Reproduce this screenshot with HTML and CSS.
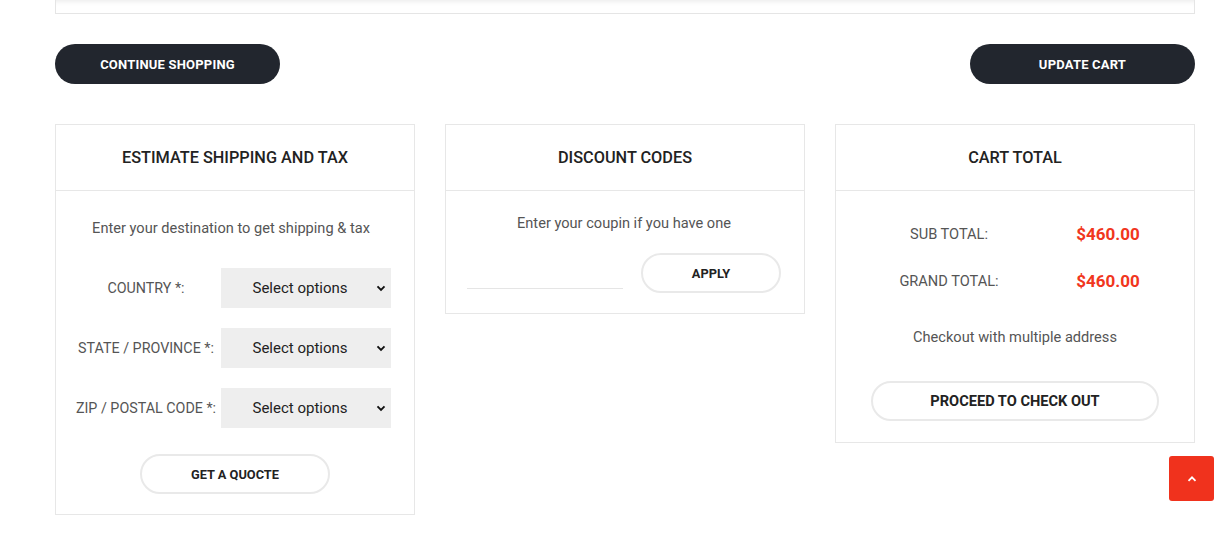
FILE: index.html
```html
<!DOCTYPE html>
<html lang="en">
<head>
<meta charset="utf-8">
<title>Cart</title>
<link rel="stylesheet" href="styles.css">
</head>
<body>
<div class="page">
  <div class="table-end"></div>

  <div class="cart-actions">
    <a class="btn-dark" href="#">CONTINUE SHOPPING</a>
    <a class="btn-dark" href="#">UPDATE CART</a>
  </div>

  <div class="panels">
    <section class="panel">
      <h3 class="panel-title">ESTIMATE SHIPPING AND TAX</h3>
      <div class="panel-body shipping">
        <p class="note">Enter your destination to get shipping &amp; tax</p>
        <div class="field">
          <label class="field-label">COUNTRY *:</label>
          <div class="select-wrap">
            <select class="select"><option>Select options</option></select>
            <svg class="chev" viewBox="0 0 10 10" width="10" height="10"><path d="M1.5 3.3 L5 6.8 L8.5 3.3" fill="none" stroke="#111" stroke-width="1.9"/></svg>
          </div>
        </div>
        <div class="field">
          <label class="field-label">STATE / PROVINCE *:</label>
          <div class="select-wrap">
            <select class="select"><option>Select options</option></select>
            <svg class="chev" viewBox="0 0 10 10" width="10" height="10"><path d="M1.5 3.3 L5 6.8 L8.5 3.3" fill="none" stroke="#111" stroke-width="1.9"/></svg>
          </div>
        </div>
        <div class="field">
          <label class="field-label">ZIP / POSTAL CODE *:</label>
          <div class="select-wrap">
            <select class="select"><option>Select options</option></select>
            <svg class="chev" viewBox="0 0 10 10" width="10" height="10"><path d="M1.5 3.3 L5 6.8 L8.5 3.3" fill="none" stroke="#111" stroke-width="1.9"/></svg>
          </div>
        </div>
        <div class="center">
          <a class="btn-outline quote" href="#">GET A QUOCTE</a>
        </div>
      </div>
    </section>

    <section class="panel">
      <h3 class="panel-title">DISCOUNT CODES</h3>
      <div class="panel-body discount">
        <p class="note">Enter your coupin if you have one</p>
        <div class="coupon-row">
          <input class="coupon-input" type="text">
          <a class="btn-outline apply" href="#">APPLY</a>
        </div>
      </div>
    </section>

    <section class="panel">
      <h3 class="panel-title">CART TOTAL</h3>
      <div class="panel-body totals">
        <div class="total-grid">
          <span class="total-label">SUB TOTAL:</span>
          <span class="total-value">$460.00</span>
          <span class="total-label">GRAND TOTAL:</span>
          <span class="total-value">$460.00</span>
        </div>
        <p class="note multi">Checkout with multiple address</p>
        <div class="center">
          <a class="btn-outline checkout" href="#">PROCEED TO CHECK OUT</a>
        </div>
      </div>
    </section>
  </div>
</div>

<a class="to-top" href="#">
  <svg viewBox="0 0 12 12" width="12" height="12"><path d="M2.5 7.8 L6 4.3 L9.5 7.8" fill="none" stroke="#fff" stroke-width="1.8"/></svg>
</a>
</body>
</html>
```

FILE: styles.css
```css
* { box-sizing: border-box; }

html, body {
  margin: 0;
  padding: 0;
  background: #fff;
}

body {
  font-family: Roboto, "Liberation Sans", Arial, sans-serif;
  color: #555;
  font-size: 14px;
}

.page {
  width: 1140px;
  margin-left: 55px;
}

.table-end {
  height: 14px;
  border: 1px solid #e5e5e5;
  border-top: none;
  box-shadow: inset 0 6px 6px -6px rgba(0, 0, 0, 0.12);
}

.cart-actions {
  display: flex;
  justify-content: space-between;
  margin-top: 30px;
}

.btn-dark {
  display: flex;
  align-items: center;
  justify-content: center;
  width: 225px;
  height: 40px;
  border-radius: 20px;
  background: #22262e;
  color: #fff;
  font-size: 13px;
  font-weight: 700;
  text-decoration: none;
  letter-spacing: 0.2px;
}

.panels {
  display: flex;
  align-items: flex-start;
  gap: 30px;
  margin-top: 40px;
}

.panel {
  width: 360px;
  border: 1px solid #e7e7e7;
}

.panel-title {
  margin: 0;
  height: 66px;
  display: flex;
  align-items: center;
  justify-content: center;
  border-bottom: 1px solid #e7e7e7;
  font-size: 16.3px;
  font-weight: 500;
  color: #222;
}

.note {
  margin: 0;
  text-align: center;
  line-height: 24px;
  font-size: 14.6px;
  color: #555;
}

.shipping {
  padding: 25px 23px 20px 15px;
}

.field {
  display: flex;
  align-items: center;
  height: 40px;
  margin-bottom: 20px;
}

.shipping .note {
  margin-bottom: 28px;
}

.field-label {
  flex: 1;
  text-align: center;
  font-size: 14.3px;
  color: #555;
}

.select-wrap {
  position: relative;
  width: 170px;
  height: 40px;
}

.select {
  appearance: none;
  -webkit-appearance: none;
  width: 100%;
  height: 100%;
  border: none;
  border-radius: 0;
  background: #eeeeee;
  font-family: Roboto, "Liberation Sans", Arial, sans-serif;
  font-size: 15px;
  color: #222;
  text-align: center;
  text-align-last: center;
  padding: 0 12px 0 0;
  outline: none;
}

.chev {
  position: absolute;
  right: 5px;
  top: 15px;
  pointer-events: none;
}

.center {
  display: flex;
  justify-content: center;
}

.btn-outline {
  display: flex;
  align-items: center;
  justify-content: center;
  height: 40px;
  border: 2px solid #e9e9e9;
  border-radius: 20px;
  background: #fff;
  color: #222;
  font-weight: 700;
  text-decoration: none;
}

.quote {
  width: 190px;
  font-size: 12.8px;
  margin-top: 6px;
  margin-left: 8px;
}

.discount {
  padding: 20px 23px 20px 21px;
}

.coupon-row {
  display: flex;
  align-items: flex-end;
  justify-content: space-between;
  margin-top: 18px;
}

.coupon-input {
  width: 156px;
  height: 30px;
  border: none;
  border-bottom: 1px solid #e5e5e5;
  margin-bottom: 4px;
  outline: none;
  background: transparent;
}

.apply {
  width: 140px;
  font-size: 12.8px;
}

.totals {
  padding: 31px 35px 21px;
}

.total-grid {
  display: grid;
  grid-template-columns: 150px 150px;
  column-gap: 9px;
  row-gap: 23px;
  justify-content: center;
  padding-left: 27px;
  line-height: 24px;
}

.total-label {
  text-align: center;
  font-size: 14.6px;
  color: #555;
}

.total-value {
  text-align: center;
  font-size: 17px;
  font-weight: 700;
  color: #f1361d;
}

.multi {
  margin-top: 32px;
}

.checkout {
  width: 288px;
  margin-top: 32px;
  font-size: 14.6px;
  font-weight: 700;
}

.to-top {
  position: fixed;
  left: 1169px;
  top: 456px;
  width: 45px;
  height: 45px;
  border-radius: 3px;
  background: #f0321d;
  display: flex;
  align-items: center;
  justify-content: center;
}
```
